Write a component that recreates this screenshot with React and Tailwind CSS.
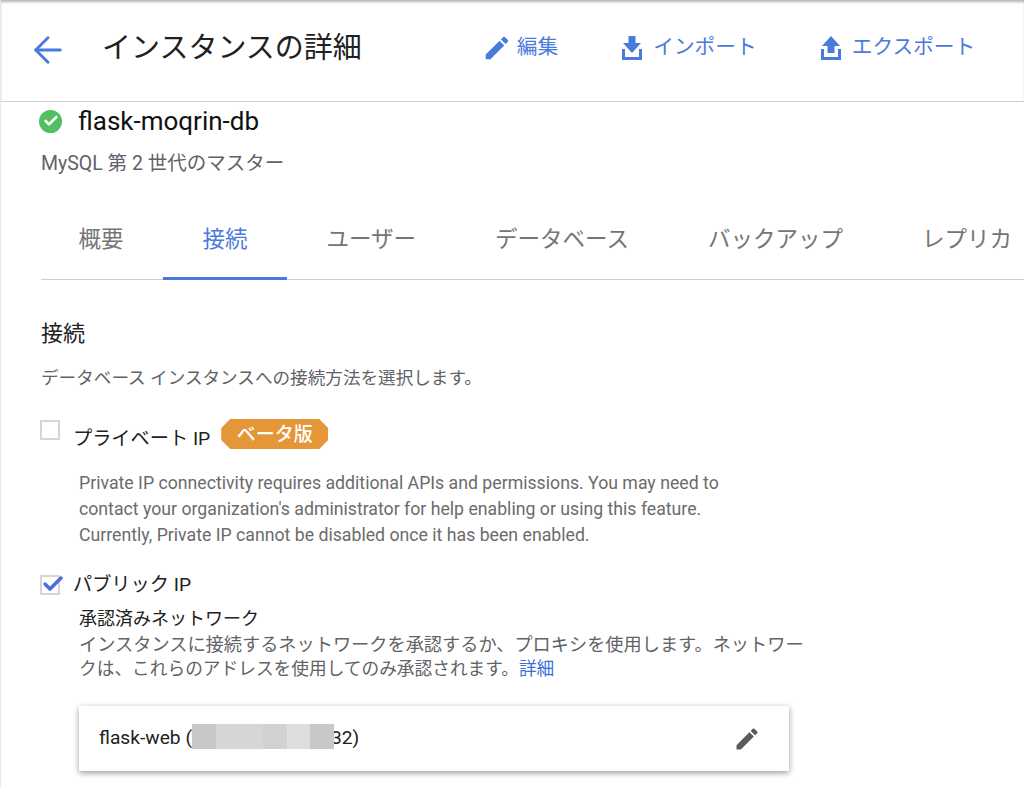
import { ArrowLeft, Check } from "lucide-react";

const font = { fontFamily: '"Roboto", "Noto Sans CJK JP", sans-serif' };

const Pencil = ({ className }) => (
    <svg viewBox="0 0 24 24" className={className} fill="currentColor">
        <path d="M3 17.25V21h3.75L17.81 9.94l-3.75-3.75L3 17.25zM20.71 7.04a1 1 0 0 0 0-1.41l-2.34-2.34a1 1 0 0 0-1.41 0l-1.83 1.83 3.75 3.75 1.83-1.83z" />
    </svg>
);

const Download = ({ className }) => (
    <svg viewBox="0 0 20 24" className={className} fill="currentColor">
        <path d="M6.5 0h7v7H19l-9 10L1 7h5.5z" />
        <path d="M0 13h3v8h14v-8h3v11H0z" />
    </svg>
);

const Upload = ({ className }) => (
    <svg viewBox="0 0 20 24" className={className} fill="currentColor">
        <path d="M10 0l9 10h-5.5v7h-7v-7H1z" />
        <path d="M0 13h3v8h14v-8h3v11H0z" />
    </svg>
);

const tabs = ["概要", "接続", "ユーザー", "データベース", "バックアップ", "レプリカ"];

const App = () => {
    return (
        <div className="w-[1024px] h-[787px] overflow-hidden bg-white border-l border-gray-200" style={font}>
            <header className="h-[102px] pt-[3px] shadow-[inset_0_3px_3px_-1px_rgba(0,0,0,0.3)] border-b border-b-[#d0d0d0] flex items-start">
                <ArrowLeft className="w-[42px] h-[42px] text-[#4a7bdc] ml-[26px] mt-[26px]" strokeWidth={1.7} />
                <h1 className="ml-[33px] mt-[23px] text-[29px] leading-[44px] text-[#212121] whitespace-nowrap">インスタンスの詳細</h1>
                <div className="flex items-center text-[#4a7bdc] text-[20.7px] mt-[30px] h-[30px] whitespace-nowrap">
                    <button className="flex items-center ml-[120px]">
                        <Pencil className="w-[30px] h-[30px]" />
                        <span className="ml-[5px]">編集</span>
                    </button>
                    <button className="flex items-center ml-[64px]">
                        <Download className="w-[20px] h-[24px]" />
                        <span className="ml-[11px]">インポート</span>
                    </button>
                    <button className="flex items-center ml-[64px]">
                        <Upload className="w-[20px] h-[24px]" />
                        <span className="ml-[11px]">エクスポート</span>
                    </button>
                </div>
            </header>

            <div className="pl-[40px]">
                <div className="flex items-center h-[38px]">
                    <span className="w-[23px] h-[23px] rounded-full bg-[#52bf62] flex items-center justify-center -ml-[2px]">
                        <Check className="w-[16px] h-[16px] text-white" strokeWidth={4} />
                    </span>
                    <span className="ml-[16px] text-[26px] text-[#111111] whitespace-nowrap">flask-moqrin-db</span>
                </div>
                <div className="mt-[12px] text-[19.5px] leading-[24px] text-[#5f6368]">MySQL 第 2 世代のマスター</div>

                <nav className="mt-[23px] h-[81px] border-b border-[#cfcfcf] flex text-[22.5px] whitespace-nowrap">
                    {tabs.map((tab) => (
                        <div
                            key={tab}
                            className={
                                tab === "接続"
                                    ? "h-[81px] px-[39.5px] pt-[24px] border-b-[3px] border-[#4a7bdc] text-[#4a7bdc]"
                                    : "h-[81px] px-[39.5px] pt-[24px] first:pl-[37.5px] text-[#757575]"
                            }
                        >
                            {tab}
                        </div>
                    ))}
                </nav>

                <h2 className="mt-[38px] text-[22px] leading-[32px] text-[#212121]">接続</h2>
                <p className="mt-[16px] text-[17.6px] leading-[24px] text-[#5f6368] whitespace-nowrap">データベース インスタンスへの接続方法を選択します。</p>

                <div className="mt-[30px] -ml-[1px] flex items-start">
                    <span className="w-[20px] h-[20px] border-2 border-[#d6d6d6]" />
                    <span className="ml-[13px] mt-[5px] text-[19.2px] leading-[28px] text-[#212121] whitespace-nowrap">プライベート IP</span>
                    <span className="ml-[11px] -mt-[1px] pt-[3px] h-[30px] w-[107px] bg-[#e59636] text-white text-[19px] font-medium flex items-center justify-center [clip-path:polygon(9px_0,98px_0,107px_9px,107px_21px,98px_30px,9px_30px,0_21px,0_9px)]">ベータ版</span>
                </div>

                <div className="ml-[38px] mt-[17px] text-[17.7px] leading-[26px] text-[#6b6b6b] whitespace-nowrap">
                    <p>Private IP connectivity requires additional APIs and permissions. You may need to</p>
                    <p>contact your organization's administrator for help enabling or using this feature.</p>
                    <p>Currently, Private IP cannot be disabled once it has been enabled.</p>
                </div>

                <div className="mt-[23px] -ml-[1px] flex items-center h-[28px]">
                    <span className="relative w-[20px] h-[20px] border-2 border-[#d6d6d6]">
                        <Check className="absolute -top-[5px] -left-[1px] w-[24px] h-[24px] text-[#4a6fdc]" strokeWidth={3.5} />
                    </span>
                    <span className="ml-[13px] text-[19.2px] text-[#212121] whitespace-nowrap">パブリック IP</span>
                </div>

                <div className="ml-[38px] mt-[10px] leading-[24px] whitespace-nowrap">
                    <p className="text-[#212121] leading-[20px] text-[18px] mb-[3px]">承認済みネットワーク</p>
                    <p className="text-[#5f6368] text-[18.2px] leading-[25px]">インスタンスに接続するネットワークを承認するか、プロキシを使用します。ネットワー</p>
                    <p className="text-[#5f6368] text-[17.7px] leading-[25px]">クは、これらのアドレスを使用してのみ承認されます。<span className="text-[#3b6fd8]">詳細</span></p>
                </div>

                <div className="ml-[38px] mt-[24px] w-[710px] h-[65px] bg-white shadow-[0_2px_6px_rgba(0,0,0,0.4)] flex items-center justify-between pl-[20px] pr-[30px]">
                    <div className="relative text-[19.2px] text-[#212121] whitespace-nowrap">
                        flask-web (<span className="inline-block w-[139px]" />32)
                        <span className="absolute left-[93px] top-0 h-[25px] w-[142px] flex">
                            <span className="flex-1 bg-[#c8c8c8]" />
                            <span className="flex-[2] bg-[#d6d6d6]" />
                            <span className="flex-1 bg-[#d2d2d2]" />
                            <span className="flex-1 bg-[#dedede]" />
                            <span className="flex-1 bg-[#c8c8c8]" />
                        </span>
                    </div>
                    <Pencil className="w-[28px] h-[28px] -mr-[2px] text-[#5a5a5a]" />
                </div>
            </div>
        </div>
    );
};

export default App;
